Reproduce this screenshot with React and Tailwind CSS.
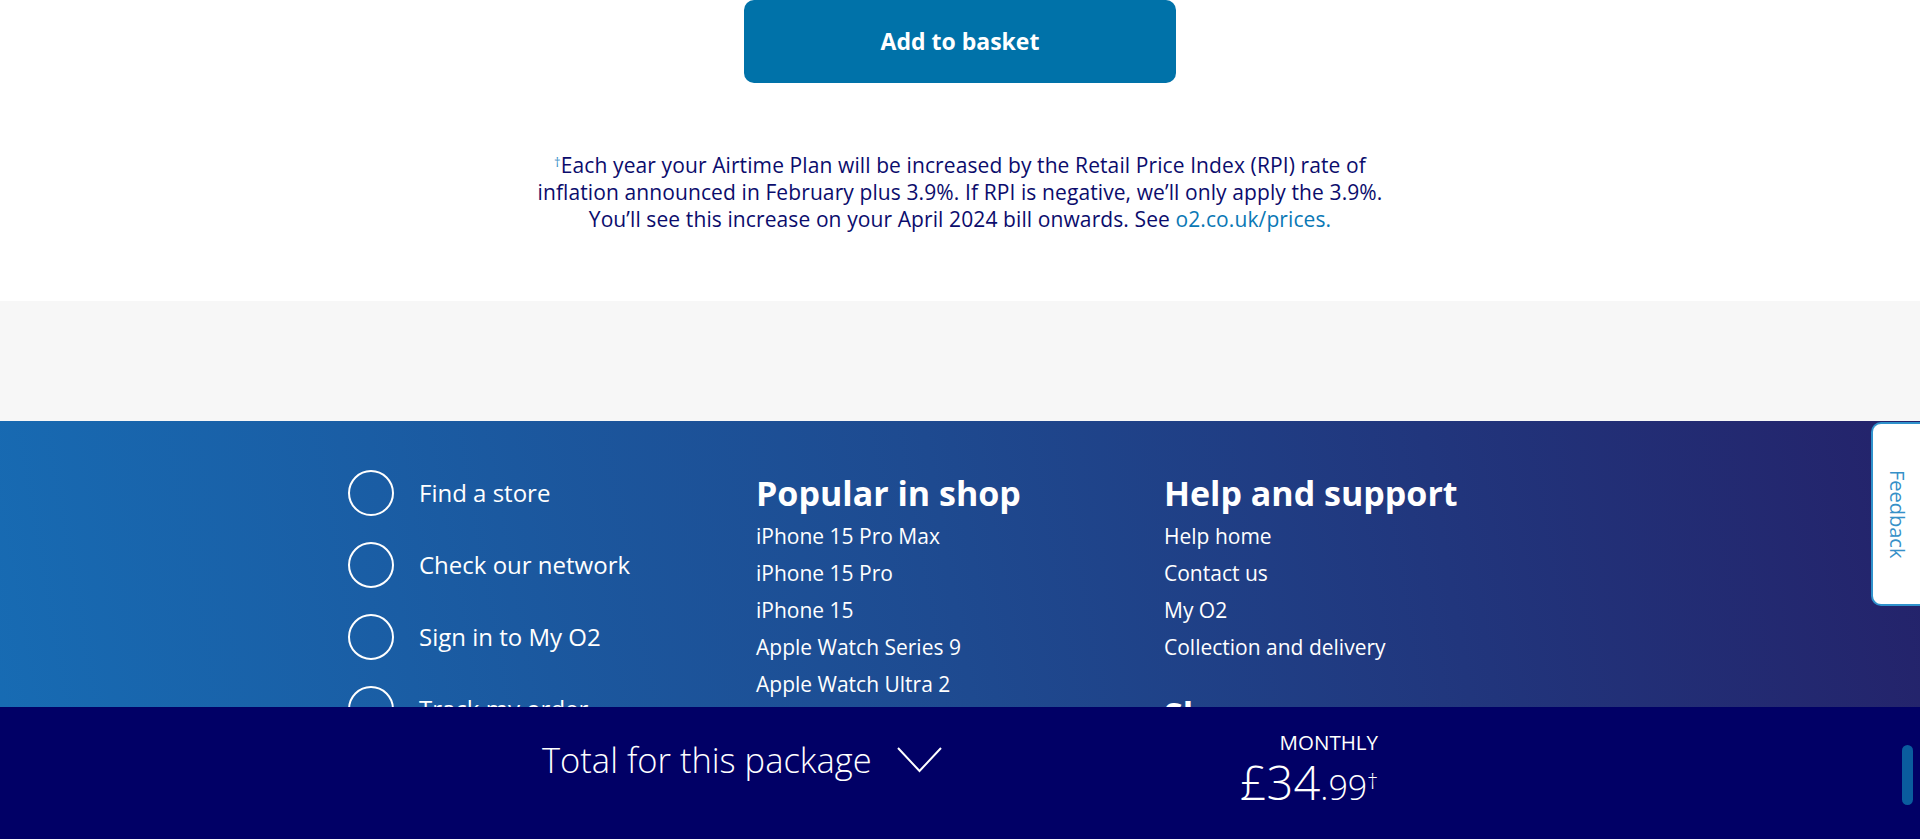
export default function App() {
  const quick = ["Find a store", "Check our network", "Sign in to My O2", "Track my order", "Pay a bill"];
  const popular = [
    "iPhone 15 Pro Max",
    "iPhone 15 Pro",
    "iPhone 15",
    "Apple Watch Series 9",
    "Apple Watch Ultra 2",
    "Samsung Galaxy S24",
    "Samsung Galaxy Z Flip5",
  ];
  const help = ["Help home", "Contact us", "My O2", "Collection and delivery"];
  const shop = ["Phones", "Tablets", "Smartwatches"];

  return (
    <div className="relative flex h-[839px] w-full flex-col overflow-hidden bg-white font-['Open_Sans',sans-serif]">
      <section className="flex h-[301px] shrink-0 flex-col items-center">
        <button className="h-[83px] w-[432px] rounded-[10px] bg-[#0072a9] text-[23px] font-bold text-white">
          Add to basket
        </button>
        <p className="mt-[69px] text-center text-[21px] leading-[27px] tracking-[0.1px] text-[#0b0c6c]">
          <sup className="text-[13px] text-[#3a8fc7]">†</sup>Each year your Airtime Plan will be increased by the Retail Price Index (RPI) rate of
          <br />
          inflation announced in February plus 3.9%. If RPI is negative, we’ll only apply the 3.9%.
          <br />
          You’ll see this increase on your April 2024 bill onwards. See{" "}
          <a className="text-[#0a78b5]">o2.co.uk/prices.</a>
        </p>
      </section>

      <div className="h-[120px] shrink-0 bg-[#f7f7f7]" />

      <footer className="flex-1 bg-[linear-gradient(80deg,#176cb4_0%,#1e4a90_50%,#24226a_100%)] text-white">
        <div className="mx-auto grid w-[1224px] grid-cols-3 pt-[49px]">
          <ul className="flex flex-col gap-[26px]">
            {quick.map((q) => (
              <li key={q} className="flex h-[46px] items-center gap-[25px]">
                <span className="h-[46px] w-[46px] shrink-0 rounded-full border-2 border-white" />
                <span className="text-[24px] font-medium">{q}</span>
              </li>
            ))}
          </ul>
          <div>
            <h3 className="text-[34px] font-bold leading-[46px]">Popular in shop</h3>
            <ul className="mt-[2px]">
              {popular.map((p) => (
                <li key={p} className="text-[21px] font-medium leading-[37px]">
                  {p}
                </li>
              ))}
            </ul>
          </div>
          <div>
            <h3 className="text-[34px] font-bold leading-[46px]">Help and support</h3>
            <ul className="mt-[2px]">
              {help.map((p) => (
                <li key={p} className="text-[21px] font-medium leading-[37px]">
                  {p}
                </li>
              ))}
            </ul>
            <h3 className="mt-[25px] text-[34px] font-bold leading-[46px]">Shop</h3>
            <ul className="mt-[2px]">
              {shop.map((p) => (
                <li key={p} className="text-[21px] font-medium leading-[37px]">
                  {p}
                </li>
              ))}
            </ul>
          </div>
        </div>
      </footer>

      {/* sticky total bar */}
      <div className="absolute bottom-0 left-0 right-0 h-[132px] bg-[#010066] text-white">
        <div className="mx-auto flex h-full w-[836px] items-start justify-between">
          <div className="flex items-center gap-[25px] pt-[30px]">
            <span className="text-[34.5px] font-light leading-[46px]">Total for this package</span>
            <svg width="45" height="26" viewBox="0 0 45 26" fill="none">
              <polyline points="1,1 22.5,24 44,1" stroke="white" strokeWidth="2" strokeLinejoin="miter" />
            </svg>
          </div>
          <div className="flex flex-col items-end pt-[23px]">
            <span className="text-[20.5px] leading-[24px]">MONTHLY</span>
            <div className="mt-[4px] font-light leading-[48px]">
              <span className="text-[47px]">£34</span>
              <span className="text-[34px]">.99</span>
              <sup className="text-[22px]">†</sup>
            </div>
          </div>
        </div>
      </div>

      {/* feedback tab */}
      <div className="absolute right-0 top-[422px] flex h-[184px] w-[49px] items-center justify-center rounded-l-[10px] border-2 border-r-0 border-[#2f92cc] bg-white">
        <span className="text-[20px] font-medium text-[#3690c8] [writing-mode:vertical-rl]">Feedback</span>
      </div>

      {/* scroll indicator */}
      <div className="absolute left-[1902px] top-[745px] h-[60px] w-[11px] rounded-full bg-[#0a5c9e]" />
    </div>
  );
}
